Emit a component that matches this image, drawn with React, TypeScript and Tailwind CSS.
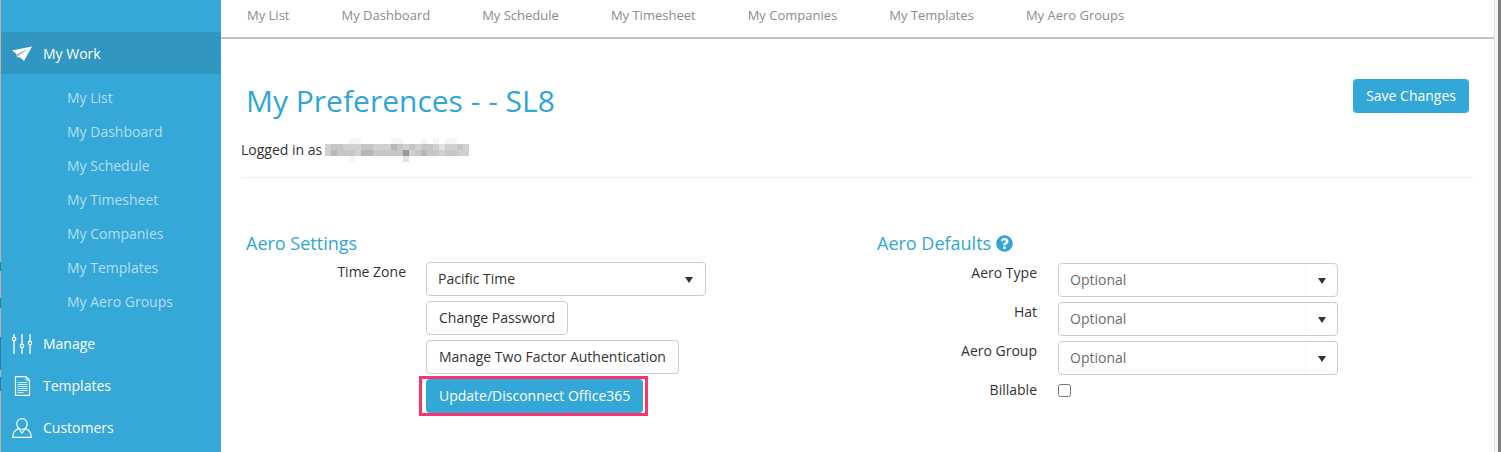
import { FaQuestionCircle } from "react-icons/fa";
import type { ReactNode } from "react";

const PAGES = [
  "My List",
  "My Dashboard",
  "My Schedule",
  "My Timesheet",
  "My Companies",
  "My Templates",
  "My Aero Groups",
];

// Grey levels of the masked e-mail address, one string per row of 6px cells
const MASK = [
  "000011000001100010101100",
  "344333443335434344323343",
  "354443554444463454434433",
  "000010000000020000000000",
];
const GREYS = ["#ffffff", "#f6f6f6", "#e4e4e4", "#d0d0d0", "#c6c6c6", "#b6b6b6", "#999999"];

function PlaneIcon() {
  return (
    <svg width="20" height="16" viewBox="0 0 20 16" aria-hidden="true">
      <path d="M0 4.500 20 .5 12 15 7.500 11 5 11.500 4.500 8Z" fill="#fff" />
      <path d="M4.500 8 17.500 2 7 9.800 5.200 11.500Z" fill="#b9bcbe" />
    </svg>
  );
}

function SlidersIcon() {
  return (
    <svg width="20" height="20" viewBox="0 0 20 20" fill="none" stroke="#fff" strokeWidth="1.3" aria-hidden="true">
      <path d="M2 0v3M2 7v13M10 0v10M10 14v6M18 0v7M18 11v9" />
      <circle cx="2" cy="5" r="1.7" />
      <circle cx="10" cy="12" r="1.7" />
      <circle cx="18" cy="9" r="1.7" />
    </svg>
  );
}

function DocumentIcon() {
  return (
    <svg width="20" height="20" viewBox="0 0 20 20" fill="none" stroke="#fff" aria-hidden="true">
      <path d="M3.500.6h10.500l3.500 3.500v15.300h-14Z" strokeWidth="1.200" />
      <path d="M14 .6v3.500h3.500" />
      <path d="M5.500 6.500h10M5.500 8.500h10M5.500 10.500h10M5.500 12.500h10M5.500 14.500h10M5.500 16.500h6" strokeWidth=".8" />
    </svg>
  );
}

function PersonIcon() {
  return (
    <svg width="20" height="20" viewBox="0 0 20 20" fill="none" stroke="#fff" strokeWidth="1.2" aria-hidden="true">
      <path d="M10 .7c3 0 5.200 2.300 5.200 5.300S12.800 11.500 10 11.500 4.800 9 4.800 6 7 .7 10 .7Z" />
      <path d="M6.500 10.500C3 12 .7 14.500.7 19.300h18.600c0-4.800-2.300-7.300-5.800-8.800L10 15Z" />
    </svg>
  );
}

function SideItem({ icon, label, active }: { icon: ReactNode; label: string; active?: boolean }) {
  return (
    <a
      href="#"
      className={`flex h-[42px] items-center gap-[11px] pl-[11px] font-medium text-white ${active ? "bg-[#3196c1] pt-px" : ""}`}
    >
      {icon}
      {label}
    </a>
  );
}

function Select({ id, value, muted }: { id: string; value: string; muted?: boolean }) {
  return (
    <div className="relative w-[280px]">
      <select
        id={id}
        className={`block h-[34px] w-full appearance-none rounded border border-[#ccc] bg-white pl-[11px] pr-10 ${muted ? "text-[#6b6b6b]" : ""}`}
      >
        <option>{value}</option>
      </select>
      <div className={`pointer-events-none absolute inset-y-px right-px flex w-8 items-center justify-center pt-px ${muted ? "border-l border-[#f8f8f8]" : ""}`}>
        <svg width="8" height="6" viewBox="0 0 8 6" aria-hidden="true">
          <path d="M0 0h8L4 6Z" fill="#333" />
        </svg>
      </div>
    </div>
  );
}

function DefaultRow({ id, label, children }: { id: string; label: string; children: ReactNode }) {
  return (
    <div className="flex gap-[21px]">
      <label htmlFor={id} className="w-40 text-right leading-5 font-medium">
        {label}
      </label>
      {children}
    </div>
  );
}

// Sliver of the window that lies behind this one
function BackEdge() {
  return (
    <div className="w-px shrink-0 bg-[#b9b0ae] pt-[262px]">
      <div className="h-[9px] bg-[#2b7e9f]" />
      <div className="mt-[27px] h-[10px] bg-[#2b7e9f]" />
      <div className="mt-[29px] h-[33px] bg-[#2b7e9f]" />
      <div className="mt-[7px] h-[14px] bg-[#2b7e9f]" />
    </div>
  );
}

export default function App() {
  const outline = "h-[34px] rounded border border-[#ccc] bg-white px-3";
  return (
    <div className="flex min-h-screen bg-white font-['Open_Sans','Noto_Sans',sans-serif] text-sm text-[#333]">
      <BackEdge />
      <aside className="w-[220px] shrink-0 bg-[#35a8d7] pt-8">
        <SideItem icon={<PlaneIcon />} label="My Work" active />
        <ul className="pt-[7px] pb-1">
          {PAGES.map((page) => (
            <li key={page}>
              <a href="#" className="flex h-[34px] items-center pl-[66px] text-[#b3dff1]">
                {page}
              </a>
            </li>
          ))}
        </ul>
        <SideItem icon={<SlidersIcon />} label="Manage" />
        <SideItem icon={<DocumentIcon />} label="Templates" />
        <SideItem icon={<PersonIcon />} label="Customers" />
      </aside>

      <main className="min-w-0 flex-1">
        <nav className="flex h-[39px] gap-[52px] border-b-2 border-[#c3c3c3] pt-[5px] pl-[26px] text-[13px] text-[#8c8c8c]">
          {PAGES.map((page) => (
            <a key={page} href="#" className="leading-5">
              {page}
            </a>
          ))}
        </nav>

        <div className="pr-[21px] pl-5">
          <header className="border-b border-[#eee] pb-[15px]">
            <div className="flex items-start justify-between pt-10 pr-1 pl-[5px]">
              <h1 className="text-[30px] leading-[44px] text-[#31a5d6]">My Preferences - - SL8</h1>
              <button type="button" className="h-[34px] rounded bg-[#33a7d8] px-[13px] text-white">
                Save Changes
              </button>
            </div>
            <div className="flex items-center gap-[3px] pt-[15px] leading-5">
              Logged in as
              <span>
                {MASK.map((row, y) => (
                  <span key={y} className="flex">
                    {row.split("").map((level, x) => (
                      <span key={x} className="h-[6px] w-[6px]" style={{ backgroundColor: GREYS[Number(level)] }} />
                    ))}
                  </span>
                ))}
              </span>
            </div>
          </header>

          <div className="grid grid-cols-2 gap-[35px] pt-[51px] pl-[5px]">
            <section>
              <h2 className="text-lg leading-7 text-[#31a5d6]">Aero Settings</h2>
              <div className="flex gap-5 pt-[5px]">
                <label htmlFor="zone" className="w-40 text-right leading-5 font-medium">
                  Time Zone
                </label>
                <div className="flex flex-col items-start gap-[5px]">
                  <Select id="zone" value="Pacific Time" />
                  <button type="button" className={outline}>Change Password</button>
                  <button type="button" className={outline}>Manage Two Factor Authentication</button>
                  <div className="-mx-[7px] -my-[3px] border-[3px] border-[#fb3470] pr-[2px] pl-1">
                    <button type="button" className="block h-[34px] rounded bg-[#33a7d8] px-[13px] text-white">
                      Update/Disconnect Office365
                    </button>
                  </div>
                </div>
              </div>
            </section>

            <section>
              <h2 className="flex items-center gap-[5px] text-lg leading-7 text-[#31a5d6]">
                Aero Defaults
                <FaQuestionCircle size={17} />
              </h2>
              <div className="flex flex-col gap-[5px] pt-[6px]">
                <DefaultRow id="type" label="Aero Type">
                  <Select id="type" value="Optional" muted />
                </DefaultRow>
                <DefaultRow id="hat" label="Hat">
                  <Select id="hat" value="Optional" muted />
                </DefaultRow>
                <DefaultRow id="group" label="Aero Group">
                  <Select id="group" value="Optional" muted />
                </DefaultRow>
                <DefaultRow id="billable" label="Billable">
                  <input id="billable" type="checkbox" className="mt-1 h-[13px] w-[13px]" />
                </DefaultRow>
              </div>
            </section>
          </div>
        </div>
      </main>
      <div className="w-[7px] shrink-0 border-r-[3px] border-l border-r-[#7f7f7f] border-l-[#e4e4e4] bg-[#f5f5f5]" />
    </div>
  );
}
